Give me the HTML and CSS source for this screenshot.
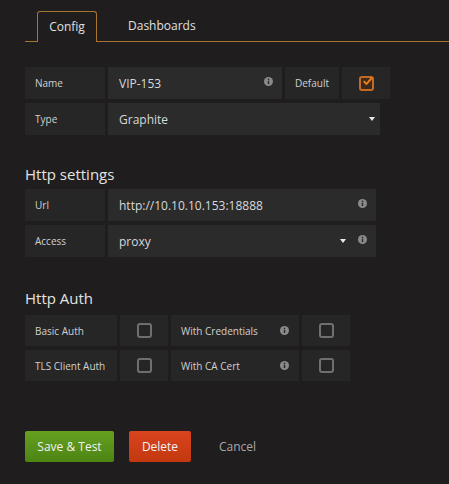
FILE: index.html
```html
<!DOCTYPE html>
<html>
<head>
<meta charset="utf-8">
<link rel="stylesheet" href="styles.css">
</head>
<body>
<div class="page">
  <div class="tabs">
    <div class="tab active">Config</div>
    <div class="tab">Dashboards</div>
  </div>

  <div class="section first">
    <div class="row">
      <div class="label w-main">Name</div>
      <div class="input w-name">VIP-153<span class="info"><svg viewBox="0 0 10 10" width="9" height="9"><circle cx="5" cy="5" r="5" fill="#8a8a8a"/><rect x="4.2" y="4.2" width="1.6" height="3.6" fill="#2b2b2b"/><circle cx="5" cy="2.7" r="0.9" fill="#2b2b2b"/></svg></span></div>
      <div class="label w-default">Default</div>
      <div class="check-cell"><span class="box checked"><svg viewBox="0 0 14 14" width="13" height="13"><path d="M3.5 7.2 L6 9.6 L11.6 3.2" fill="none" stroke="#eb7b18" stroke-width="2.2" stroke-linecap="round" stroke-linejoin="round"/></svg></span></div>
    </div>
    <div class="row">
      <div class="label w-main">Type</div>
      <div class="input w-type">Graphite<span class="caret"></span></div>
    </div>
  </div>

  <h3 class="heading h-settings">Http settings</h3>
  <div class="section">
    <div class="row">
      <div class="label w-main">Url</div>
      <div class="input w-url">http://10.10.10.153:18888<span class="info"><svg viewBox="0 0 10 10" width="9" height="9"><circle cx="5" cy="5" r="5" fill="#8a8a8a"/><rect x="4.2" y="4.2" width="1.6" height="3.6" fill="#2b2b2b"/><circle cx="5" cy="2.7" r="0.9" fill="#2b2b2b"/></svg></span></div>
    </div>
    <div class="row">
      <div class="label w-main">Access</div>
      <div class="input w-url">proxy<span class="caret near"></span><span class="info"><svg viewBox="0 0 10 10" width="9" height="9"><circle cx="5" cy="5" r="5" fill="#8a8a8a"/><rect x="4.2" y="4.2" width="1.6" height="3.6" fill="#2b2b2b"/><circle cx="5" cy="2.7" r="0.9" fill="#2b2b2b"/></svg></span></div>
    </div>
  </div>

  <h3 class="heading h-auth">Http Auth</h3>
  <div class="section auth">
    <div class="row">
      <div class="label w-auth">Basic Auth</div>
      <div class="check-cell"><span class="box"></span></div>
      <div class="label w-cred">With Credentials<span class="info"><svg viewBox="0 0 10 10" width="9" height="9"><circle cx="5" cy="5" r="5" fill="#8a8a8a"/><rect x="4.2" y="4.2" width="1.6" height="3.6" fill="#262626"/><circle cx="5" cy="2.7" r="0.9" fill="#262626"/></svg></span></div>
      <div class="check-cell"><span class="box"></span></div>
    </div>
    <div class="row">
      <div class="label w-auth">TLS Client Auth</div>
      <div class="check-cell"><span class="box"></span></div>
      <div class="label w-cred">With CA Cert<span class="info"><svg viewBox="0 0 10 10" width="9" height="9"><circle cx="5" cy="5" r="5" fill="#8a8a8a"/><rect x="4.2" y="4.2" width="1.6" height="3.6" fill="#262626"/><circle cx="5" cy="2.7" r="0.9" fill="#262626"/></svg></span></div>
      <div class="check-cell"><span class="box"></span></div>
    </div>
  </div>

  <div class="buttons">
    <button class="btn btn-success">Save &amp; Test</button>
    <button class="btn btn-danger">Delete</button>
    <span class="cancel">Cancel</span>
  </div>
</div>
</body>
</html>
```

FILE: styles.css
```css
html, body {
  margin: 0;
  padding: 0;
  background: #1f1d1d;
  height: 100%;
}
body {
  font-family: "Open Sans", "Noto Sans", sans-serif;
  color: #d8d9da;
}
.page {
  padding: 11px 0 0 25px;
}
.tabs {
  display: flex;
  align-items: flex-end;
  border-bottom: 1px solid #a8742f;
  padding-left: 12px;
  height: 30px;
}
.tab {
  height: 30px;
  line-height: 29px;
  font-size: 12px;
  color: #e0e0e0;
  box-sizing: border-box;
}
.tab.active {
  width: 60px;
  text-align: center;
  border: 1px solid #a8742f;
  border-bottom: none;
  border-radius: 3px 3px 0 0;
  background: #1f1d1d;
  margin-bottom: -1px;
  height: 31px;
  line-height: 30px;
}
.tab + .tab {
  margin-left: 31px;
}
.section {
  display: flex;
  flex-direction: column;
  gap: 4px;
}
.section.first {
  margin-top: 25px;
}
.row {
  display: flex;
  gap: 3px;
  height: 32px;
}
.auth .row {
  height: 31px;
}
.label {
  background: #262626;
  font-size: 10px;
  color: #d0d0d0;
  display: flex;
  align-items: center;
  padding: 0 10px;
  box-sizing: border-box;
  white-space: nowrap;
}
.input {
  background: #2b2b2b;
  font-size: 12px;
  color: #d8d9da;
  display: flex;
  align-items: center;
  padding: 0 9px 0 11px;
  box-sizing: border-box;
  white-space: nowrap;
}
.w-main { width: 80px; }
.w-name { width: 174px; }
.w-default { width: 54px; padding: 0 10px; }
.w-type { width: 272px; }
.w-url { width: 268px; }
.w-auth { width: 92px; }
.w-cred { width: 128px; }
.info {
  margin-left: auto;
  display: flex;
  align-items: center;
  margin-top: -4px;
}
.w-cred .info { margin-top: 0; }
.caret {
  margin-left: auto;
  width: 0;
  height: 0;
  border-left: 3.5px solid transparent;
  border-right: 3.5px solid transparent;
  border-top: 4px solid #e8e8e8;
  margin-right: -4px;
}
.caret.near {
  margin-right: 0;
}
.caret.near + .info {
  margin-left: 12px;
}
.check-cell {
  width: 48px;
  background: #262626;
  display: flex;
  align-items: center;
  justify-content: center;
}
.box {
  width: 15px;
  height: 15px;
  box-sizing: border-box;
  border: 2px solid #6f6f6f;
  border-radius: 3px;
  background: #252525;
  display: flex;
  align-items: center;
  justify-content: center;
}
.box.checked {
  border-color: #c46a22;
  background: #3a2a1e;
}
.box.checked svg {
  margin: -3px -2px 0 0;
}
.heading {
  margin: 0;
  font-weight: 400;
  font-size: 15px;
  line-height: 20px;
  color: #e3e3e3;
}
.h-settings {
  margin-top: 29px;
  margin-bottom: 5px;
}
.h-auth {
  margin-top: 31px;
  margin-bottom: 7px;
}
.buttons {
  margin-top: 50px;
  display: flex;
  align-items: center;
}
.btn {
  font-family: "Open Sans", "Noto Sans", sans-serif;
  font-size: 12px;
  color: #f2f2f2;
  border: none;
  border-radius: 2px;
  height: 31px;
  padding: 0;
  cursor: pointer;
}
.btn-success {
  width: 89px;
  background: linear-gradient(#66a020, #4c8414);
}
.btn-danger {
  width: 62px;
  margin-left: 15px;
  background: linear-gradient(#d9441e, #c2380f);
}
.cancel {
  margin-left: 28px;
  font-size: 12px;
  color: #a8a8a8;
}
```
